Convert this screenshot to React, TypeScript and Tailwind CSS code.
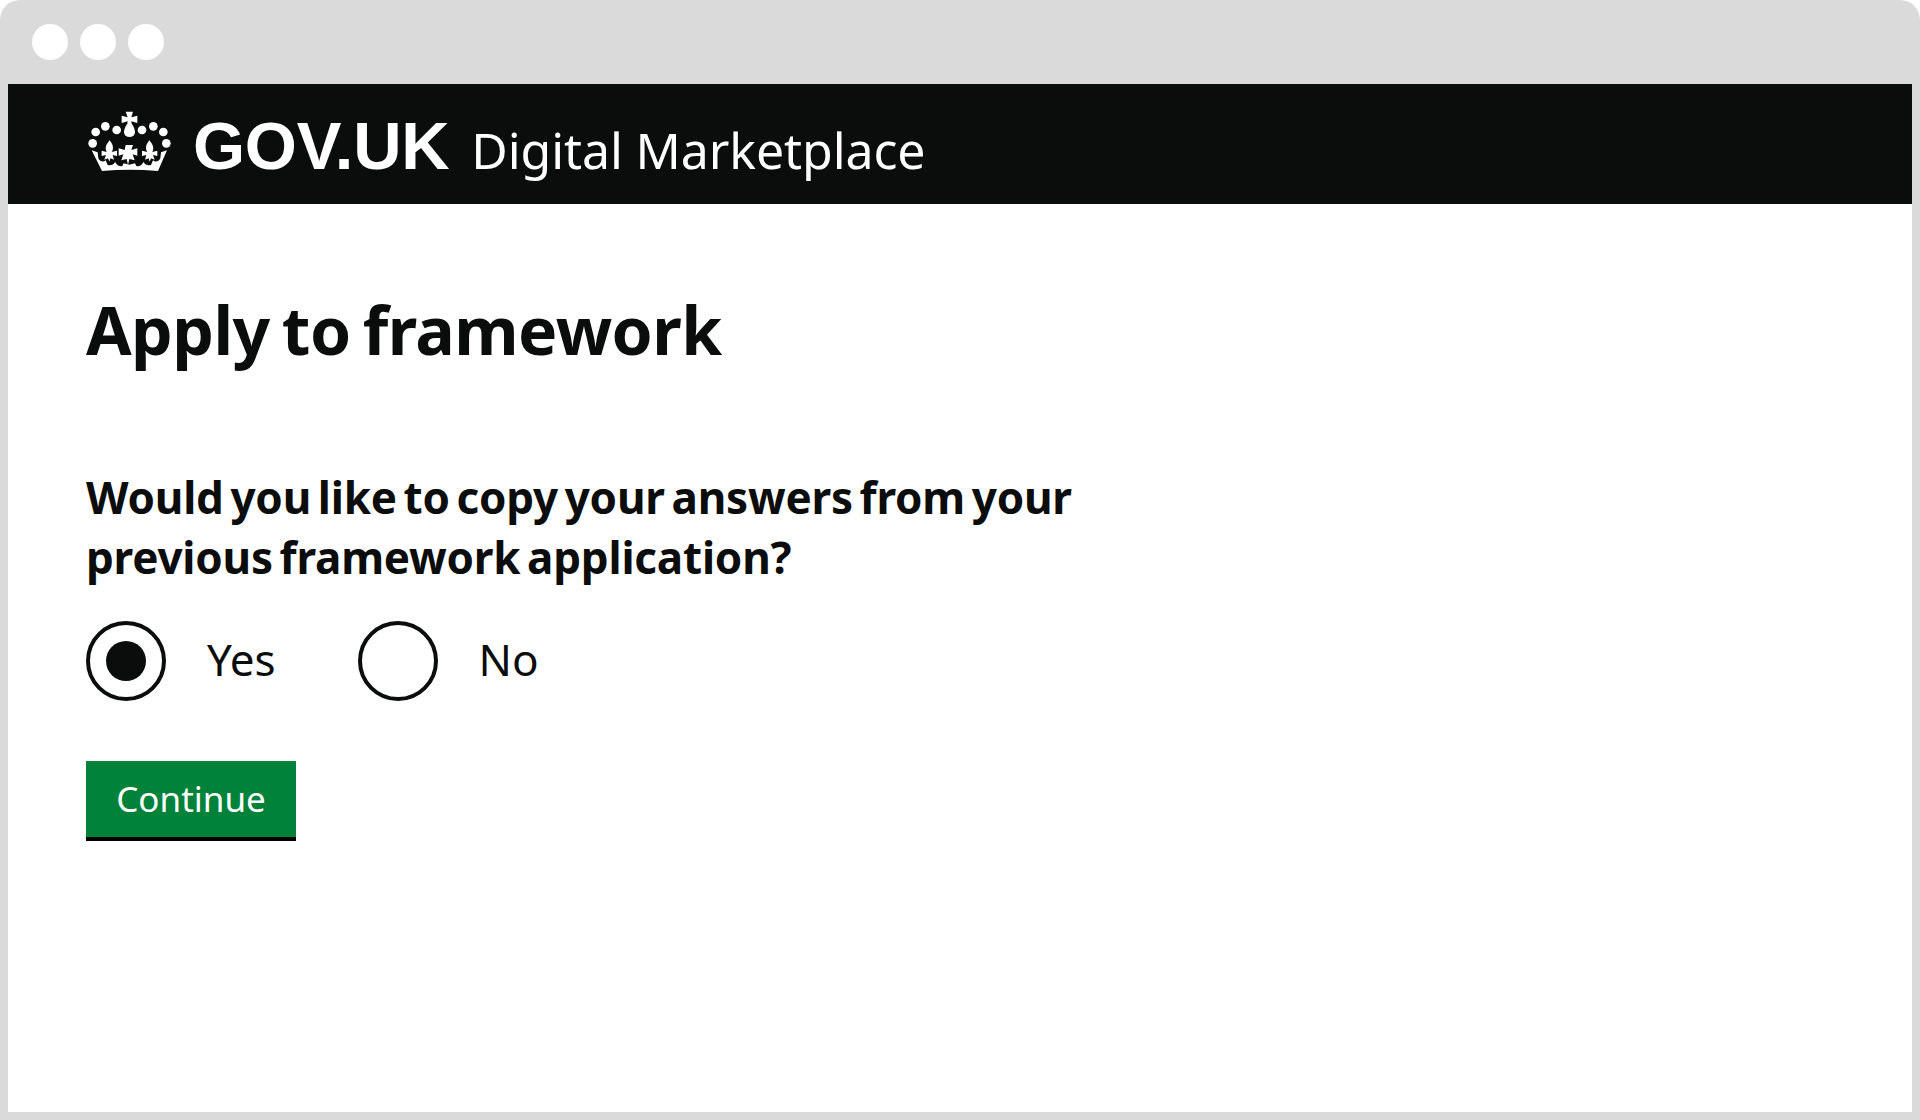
function Crown() {
  return (
    <svg viewBox="50 34 255 180" className="mb-[6px] ml-[-1px] w-[85px] h-[60px] shrink-0" fill="#fff" aria-hidden="true">
      <circle cx="67" cy="131" r="13" />
      <circle cx="76" cy="97" r="13" />
      <circle cx="105" cy="80" r="13" />
      <circle cx="139" cy="91" r="13" />
      <circle cx="215" cy="91" r="13" />
      <circle cx="249" cy="80" r="13" />
      <circle cx="279" cy="97" r="13" />
      <circle cx="288" cy="131" r="13" />
      {/* top cross and drop */}
      <path d="M166 36h22l-5 17 18-5v22l-18-5 1 7c8 10 10 20 10 27a17 17 0 0 1-33 0c0-7 2-17 10-27l1-7-18 5V48l18 5z" />
      {/* centre cross */}
      <path d="M166 136h22l-5 15 18-5v22l-14-4 6 18-16-4-4 18-4-18-16 4 6-18-14 4v-22l18 5z" />
      {/* left fleur */}
      <path d="M118 122c8 10 12 18 9 30l-3 5 16-4v16l-13-3 4 14-11-4-3 10-4-10-11 4 5-14-13 3v-16l15 4-2-5c-3-12 3-20 11-30z" />
      {/* right fleur */}
      <path d="M237 122c8 10 14 18 11 30l-2 5 15-4v16l-13-3 5 14-11-4-4 10-3-10-11 4 4-14-13 3v-16l16 4-3-5c-3-12 1-20 9-30z" />
      {/* band */}
      <path d="M64 152l18 6 2 18c5 10 15 13 22 6l6 14c10 2 18-1 22-9 6 10 15 15 22 12l4-8 17 4 17-4 4 8c7 3 16-2 22-12 4 8 12 11 22 9l6-14c7 7 17 4 22-6l2-18 18-6-27 62c-56-5-112-5-168 0z" />
    </svg>
  );
}

function Radio({ label, checked }: { label: string; checked?: boolean }) {
  return (
    <label className="flex items-center gap-[41px]">
      <span className="flex size-20 items-center justify-center rounded-full border-4 border-[#0b0c0c]">
        {checked && <span className="size-10 rounded-full bg-[#0b0c0c]" />}
      </span>
      <span className="mt-[-5px] text-[44px] leading-none">{label}</span>
    </label>
  );
}

export default function App() {
  return (
    <div className="h-[1120px] w-full bg-white text-[#0b0c0c] font-['Noto_Sans',sans-serif]">
      <div className="flex h-full flex-col rounded-t-[20px] bg-[#dadada] px-2 pb-2">
        <div className="flex h-[84px] shrink-0 gap-3 px-6 pt-6">
          <span className="size-9 rounded-full bg-white" />
          <span className="size-9 rounded-full bg-white" />
          <span className="size-9 rounded-full bg-white" />
        </div>
        <header className="flex h-[120px] shrink-0 items-center bg-[#0b0c0c] pl-[80px] text-white">
          <Crown />
          <span className="ml-[21px] mt-[3px] font-['Liberation_Sans',sans-serif] text-[67px] font-bold leading-none tracking-[-0.3px]">GOV.UK</span>
          <span className="ml-[22px] mt-[12px] text-[50px] leading-none tracking-[-0.1px]">Digital Marketplace</span>
        </header>
        <main className="flex-1 bg-white px-[78px] pt-[85px]">
          <h1 className="text-[66px] font-bold leading-[80px] tracking-[-0.55px] [word-spacing:-4.5px]">Apply to framework</h1>
          <h2 className="mt-[98px] w-[1040px] text-[44px] font-bold leading-[60px] tracking-[-0.2px] [word-spacing:-4.5px]">
            Would you like to copy your answers from your previous framework application?
          </h2>
          <div className="mt-[34px] flex gap-[82px]">
            <Radio label="Yes" checked />
            <Radio label="No" />
          </div>
          <button className="mt-[60px] block h-20 w-[210px] border-b-4 border-black bg-[#00823b] text-[35px] text-white">
            Continue
          </button>
        </main>
      </div>
    </div>
  );
}
